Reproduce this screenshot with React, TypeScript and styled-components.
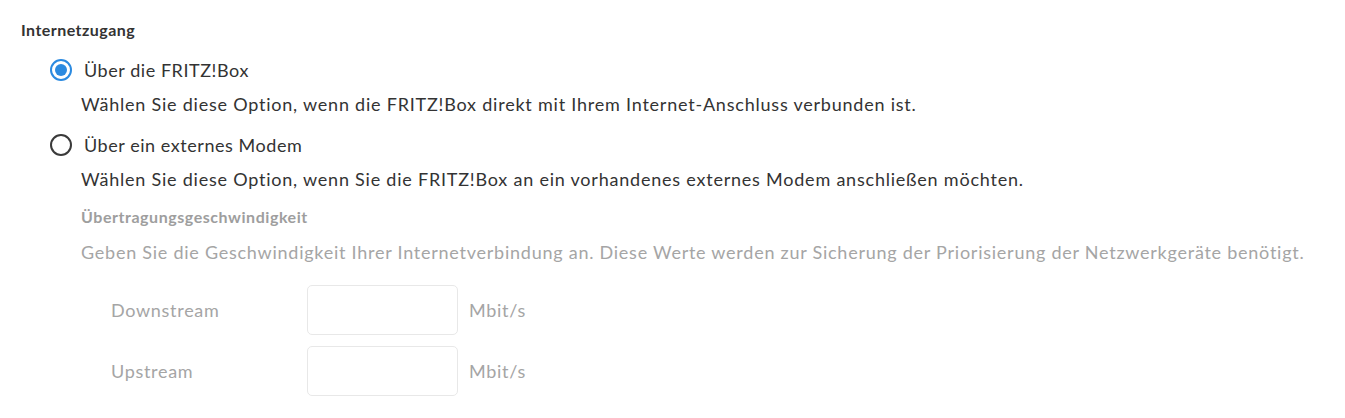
import React from "react";
import styled, { createGlobalStyle } from "styled-components";

const GlobalStyle = createGlobalStyle`
  html, body {
    margin: 0;
    padding: 0;
    background: #ffffff;
  }
  body {
    font-family: "Lato", "Liberation Sans", sans-serif;
    color: #333333;
    -webkit-font-smoothing: antialiased;
  }
`;

const Page = styled.div`
  padding: 20px 0 0 21px;
  width: 1324px;
  box-sizing: border-box;
`;

const SectionTitle = styled.h2`
  margin: 0;
  font-size: 16px;
  font-weight: 700;
  line-height: 20px;
  letter-spacing: 0.45px;
  color: #333333;
`;

const OptionList = styled.div`
  margin: 12px 0 0 29px;
  display: flex;
  flex-direction: column;
  gap: 11px;
`;

const Option = styled.div`
  display: flex;
  flex-direction: column;
`;

const RadioRow = styled.label`
  display: flex;
  align-items: center;
  gap: 12px;
  height: 36px;
  cursor: pointer;
`;

const Radio = styled.span<{ $checked?: boolean }>`
  box-sizing: border-box;
  width: 22px;
  height: 22px;
  border-radius: 50%;
  border: 2px solid ${(p) => (p.$checked ? "#2b8ae0" : "#3a3a3a")};
  display: flex;
  align-items: center;
  justify-content: center;
  flex: none;
  &::after {
    content: "";
    width: 12px;
    height: 12px;
    border-radius: 50%;
    background: ${(p) => (p.$checked ? "#2b8ae0" : "transparent")};
  }
`;

const OptionLabel = styled.span`
  font-size: 18px;
  line-height: 24px;
  letter-spacing: 0.55px;
  color: #333333;
`;

const Description = styled.p`
  margin: 4px 0 0 31px;
  font-size: 18px;
  line-height: 24px;
  letter-spacing: 0.78px;
  color: #333333;
`;

const SubSection = styled.div`
  margin: 16px 0 0 31px;
  display: flex;
  flex-direction: column;
`;

const SubTitle = styled.h3`
  margin: 0;
  font-size: 16px;
  font-weight: 700;
  line-height: 20px;
  letter-spacing: 0.55px;
  color: #9e9e9e;
`;

const Hint = styled.p`
  margin: 13px 0 0 0;
  font-size: 18px;
  line-height: 24px;
  letter-spacing: 0.75px;
  color: #a5a5a5;
`;

const FieldGrid = styled.div`
  margin-top: 21px;
  display: grid;
  grid-template-columns: 185px 151px auto;
  column-gap: 11px;
  row-gap: 11px;
  align-items: center;
  padding-left: 30px;
`;

const FieldLabel = styled.span`
  font-size: 18px;
  line-height: 24px;
  letter-spacing: 0.7px;
  color: #a5a5a5;
`;

const Input = styled.input`
  box-sizing: border-box;
  width: 151px;
  height: 50px;
  margin: 0;
  border: 1px solid #e8e8e8;
  border-radius: 5px;
  background: #ffffff;
  font-family: inherit;
  font-size: 18px;
  padding: 0 10px;
  outline: none;
`;

const Unit = styled.span`
  font-size: 18px;
  line-height: 24px;
  letter-spacing: 0.7px;
  color: #a5a5a5;
`;

export default function App() {
  return (
    <>
      <GlobalStyle />
      <Page>
        <SectionTitle>Internetzugang</SectionTitle>
        <OptionList>
          <Option>
            <RadioRow>
              <Radio $checked />
              <OptionLabel>Über die FRITZ!Box</OptionLabel>
            </RadioRow>
            <Description>
              Wählen Sie diese Option, wenn die FRITZ!Box direkt mit Ihrem Internet-Anschluss verbunden ist.
            </Description>
          </Option>
          <Option>
            <RadioRow>
              <Radio />
              <OptionLabel>Über ein externes Modem</OptionLabel>
            </RadioRow>
            <Description>
              Wählen Sie diese Option, wenn Sie die FRITZ!Box an ein vorhandenes externes Modem anschließen möchten.
            </Description>
            <SubSection>
              <SubTitle>Übertragungsgeschwindigkeit</SubTitle>
              <Hint>
                Geben Sie die Geschwindigkeit Ihrer Internetverbindung an. Diese Werte werden zur Sicherung der Priorisierung der Netzwerkgeräte benötigt.
              </Hint>
              <FieldGrid>
                <FieldLabel>Downstream</FieldLabel>
                <Input type="text" disabled />
                <Unit>Mbit/s</Unit>
                <FieldLabel>Upstream</FieldLabel>
                <Input type="text" disabled />
                <Unit>Mbit/s</Unit>
              </FieldGrid>
            </SubSection>
          </Option>
        </OptionList>
      </Page>
    </>
  );
}
